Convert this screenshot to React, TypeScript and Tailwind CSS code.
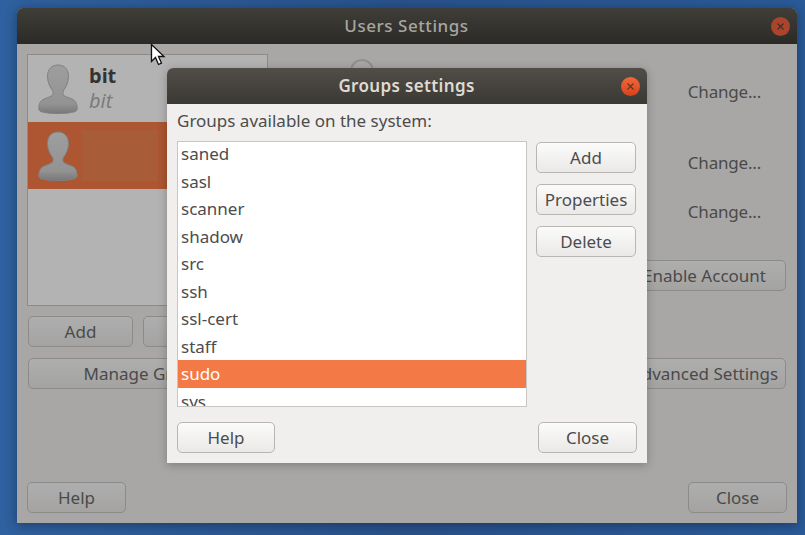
import React from "react";

const font = "font-['Noto_Sans',sans-serif]";

function Avatar() {
  return (
    <svg width="40" height="50" viewBox="0 0 40 50" className="shrink-0">
      <defs>
        <linearGradient id="av" x1="0" y1="0" x2="0" y2="1">
          <stop offset="0" stopColor="#9e9e9e" />
          <stop offset="0.8" stopColor="#939393" />
          <stop offset="1" stopColor="#787878" />
        </linearGradient>
      </defs>
      <path
        d="M20 1C13.500 1 9.500 5.500 9.500 12.500c0 5.500 2.500 11 5.500 14.500v3.500c-1.500 2-5 3-9 4.500C2.500 36.500 1 39.500 .8 44c-.1 2 .7 3.200 2.500 3.700C7.500 49 14 49.500 20 49.500s12.500-.5 16.700-1.800c1.800-.5 2.600-1.700 2.500-3.700-.2-4.500-1.700-7.500-5.200-9-4-1.500-7.500-2.500-9-4.500V27c3-3.500 5.500-9 5.500-14.500C30.500 5.500 26.500 1 20 1z"
        fill="url(#av)"
        stroke="#808080"
        strokeWidth="1"
      />
    </svg>
  );
}

function CloseDot({ dim }: { dim?: boolean }) {
  return (
    <span
      className={`flex h-[19px] w-[19px] items-center justify-center rounded-full ${
        dim ? "bg-[#a8452a]" : "bg-gradient-to-b from-[#f0683a] to-[#d4431a]"
      }`}
    >
      <svg width="9" height="9" viewBox="0 0 9 9">
        <path d="M1.500 1.500l6 6M7.500 1.500l-6 6" stroke={dim ? "#40302a" : "#6b3320"} strokeWidth="1.200" />
      </svg>
    </span>
  );
}

function Btn({ children, className = "" }: { children: React.ReactNode; className?: string }) {
  return (
    <div
      className={`flex h-[31px] items-center justify-center rounded-[5px] border border-[#b9b5b0] bg-gradient-to-b from-[#fbfbfb] to-[#ebe9e7] text-[#4c4c4c] ${className}`}
    >
      {children}
    </div>
  );
}

function DimBtn({ children, className = "" }: { children?: React.ReactNode; className?: string }) {
  return (
    <div
      className={`flex h-[31px] items-center overflow-hidden whitespace-nowrap rounded-[5px] border border-[#8c8b89] bg-gradient-to-b from-[#aeaeae] to-[#a4a3a2] text-[#4a4a4a] ${className}`}
    >
      {children}
    </div>
  );
}

const groups = ["saned", "sasl", "scanner", "shadow", "src", "ssh", "ssl-cert", "staff", "sudo", "sys"];

export default function App() {
  return (
    <div className={`relative h-[535px] w-[805px] overflow-hidden bg-gradient-to-r from-[#2f609f] via-[#28528c] to-[#2a5a98] text-[17px] ${font}`}>
      {/* Users Settings window */}
      <div className="absolute left-[17px] top-[8px] flex h-[515px] w-[780px] flex-col overflow-hidden rounded-t-[6px] bg-[#a8a7a5] shadow-[0_2px_12px_rgba(0,0,0,0.35)]">
        <div className="flex h-[36px] shrink-0 items-center bg-gradient-to-b from-[#403e39] to-[#2c2a26] pl-[25px] pr-[7px]">
          <span className="flex-1 text-center font-medium tracking-[0.55px] text-[#a8a6a0]">Users Settings</span>
          <CloseDot dim />
        </div>
        <div className="flex flex-1 flex-col px-[10px] pb-[10px] pt-[10px]">
          <div className="flex flex-1 gap-[60px]">
            <div className="flex w-[241px] flex-col">
              <div className="h-[252px] border border-[#8c8b89] bg-[#b3b3b3]">
                <div className="flex h-[67px] items-center pl-[10px]">
                  <Avatar />
                  <div className="ml-[11px] -mt-[1px] leading-[25px]">
                    <div className="text-[20px] font-bold text-[#333333]">bit</div>
                    <div className="text-[20px] italic text-[#7c7c7c]">bit</div>
                  </div>
                </div>
                <div className="flex h-[67px] items-center bg-[#ad5631] pl-[10px]">
                  <Avatar />
                  <div className="ml-[4px] h-[51px] w-[76px] bg-[#a85c37]" />
                </div>
              </div>
              <div className="mt-[10px] flex gap-[10px] pl-[1px]">
                <DimBtn className="w-[105px] justify-center">Add</DimBtn>
                <DimBtn className="flex-1" />
              </div>
              <DimBtn className="ml-[1px] mt-[11px] w-[239px] justify-center">Manage Groups</DimBtn>
            </div>
            <div className="flex flex-1 flex-col items-end">
              <div className="flex h-[76px] w-full justify-between">
                <span className="ml-[22px] mt-[5px] h-[24px] w-[24px] rounded-full border-2 border-[#8f8f8d]" />
                <span className="mr-[26px] mt-[25px] tracking-[-0.2px] text-[#4a4a4a]">Change...</span>
              </div>
              <span className="mr-[26px] mt-[20px] tracking-[-0.2px] text-[#4a4a4a]">Change...</span>
              <span className="mr-[26px] mt-[23.500px] tracking-[-0.2px] text-[#4a4a4a]">Change...</span>
              <DimBtn className="mr-[1px] mt-[35.500px] w-[163px] justify-center">Enable Account</DimBtn>
              <DimBtn className="mr-[1px] mt-[67px] w-[163px] justify-center">Advanced Settings</DimBtn>
            </div>
          </div>
          <div className="flex justify-between">
            <DimBtn className="w-[99px] justify-center">Help</DimBtn>
            <DimBtn className="w-[99px] justify-center">Close</DimBtn>
          </div>
        </div>
      </div>

      {/* Mouse pointer */}
      <svg className="absolute left-[150px] top-[43px]" width="16" height="24" viewBox="0 0 16 24">
        <path d="M1.500 1.500v17l4-4 3 7 3-1.300-3-6.700h5.500z" fill="#fff" stroke="#111" strokeWidth="1.300" />
      </svg>

      {/* Groups settings dialog */}
      <div className="absolute left-[167px] top-[68px] flex h-[395px] w-[480px] flex-col overflow-hidden rounded-t-[6px] bg-[#f0efed] shadow-[0_2px_10px_rgba(0,0,0,0.25)]">
        <div className="flex h-[36px] shrink-0 items-center bg-gradient-to-b from-[#514e48] to-[#3b3934] pr-[7px]">
          <span className="flex-1 pl-[25px] text-center font-semibold tracking-[0.35px] text-[#dfdbd2]">Groups settings</span>
          <CloseDot />
        </div>
        <div className="flex flex-1 flex-col px-[10px] pt-[4px]">
          <div className="h-[33px] leading-[25px] text-[#4c4c4c]">Groups available on the system:</div>
          <div className="flex gap-[9px]">
            <div className="h-[266px] w-[350px] overflow-hidden border border-[#c9c5c0] bg-white">
              <div className="-mt-[2px]">
                {groups.map((g) => (
                  <div
                    key={g}
                    className={`flex h-[27.500px] items-center pl-[3px] ${
                      g === "sudo" ? "bg-[#f37a46] text-white" : "text-[#4c4c4c]"
                    }`}
                  >
                    {g}
                  </div>
                ))}
              </div>
            </div>
            <div className="mt-[1px] flex w-[100px] flex-col gap-[11px]">
              <Btn>Add</Btn>
              <Btn>Properties</Btn>
              <Btn>Delete</Btn>
            </div>
          </div>
          <div className="mt-[15px] flex justify-between">
            <Btn className="w-[98px]">Help</Btn>
            <Btn className="w-[99px]">Close</Btn>
          </div>
        </div>
      </div>
    </div>
  );
}
